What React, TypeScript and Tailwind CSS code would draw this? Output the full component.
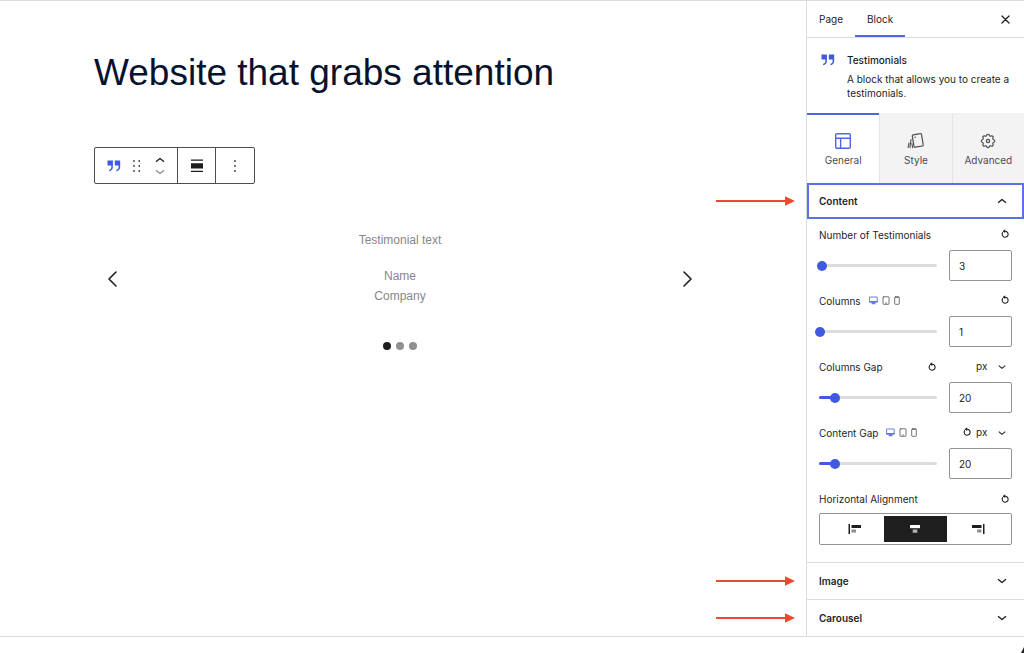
import { useState } from 'react';
import type { ReactNode } from 'react';
import clsx from 'clsx';

const stroke = {
  fill: 'none',
  stroke: 'currentColor',
  strokeLinecap: 'round',
  strokeLinejoin: 'round',
} as const;

function QuoteIcon() {
  return (
    <svg width="14" height="12" viewBox="0 0 14 12" className="text-[#3f5ae0]" aria-hidden="true">
      <path d="M.5.5h5.4v6.3c0 2.6-1.3 4.2-3.8 4.4v-1.4c1.4-.3 2.1-1.1 2.2-2.6V5.6H.5z" fill="currentColor" />
      <path d="M7.8.5h5.4v6.3c0 2.6-1.3 4.2-3.8 4.4v-1.4c1.4-.3 2.1-1.1 2.2-2.6V5.6H7.8z" fill="currentColor" />
    </svg>
  );
}

function Chevron({ up = false, className }: { up?: boolean; className?: string }) {
  return (
    <svg width="10" height="6" viewBox="0 0 10 6" className={className} aria-hidden="true">
      <path d={up ? 'M1 4.8 5 1.4l4 3.4' : 'M1 1.2l4 3.4 4-3.4'} {...stroke} strokeWidth="1.3" strokeLinecap="butt" />
    </svg>
  );
}

function ResetButton({ label }: { label: string }) {
  return (
    <button type="button" aria-label={`Reset ${label}`} className="text-[#1e1e1e]">
      <svg width="10" height="10" viewBox="0 0 10 10" aria-hidden="true">
        <path d="M2.6 3.6A3 3 0 1 0 5.2 2.2H3.4" {...stroke} strokeWidth="1.1" />
        <path d="M5.2.3 2.8 2.2l2.4 1.9z" fill="currentColor" />
      </svg>
    </button>
  );
}

/** Desktop / tablet / mobile switch beside responsive settings */
function Devices() {
  return (
    <span className="flex items-center gap-1 pb-0.5 text-[#60646a]">
      <button type="button" aria-label="Desktop" className="text-[#5b72ea]">
        <svg width="9" height="9" viewBox="0 0 9 9" aria-hidden="true">
          <path d="M.8 1h7.4v5H.8z" {...stroke} strokeWidth=".9" />
          <path d="M.5 5h8v1.4h-8zM3.5 6.2h2v1h1v1h-4v-1h1z" fill="currentColor" />
        </svg>
      </button>
      <button type="button" aria-label="Tablet">
        <svg width="8" height="9" viewBox="0 0 8 9" aria-hidden="true">
          <rect x="1" y=".8" width="6" height="7.5" rx=".7" {...stroke} strokeWidth=".9" />
          <path d="M3.3 7h1.4" {...stroke} strokeWidth=".8" />
        </svg>
      </button>
      <button type="button" aria-label="Mobile">
        <svg width="6" height="9" viewBox="0 0 6 9" aria-hidden="true">
          <rect x=".7" y=".8" width="4.6" height="7.5" rx=".7" {...stroke} strokeWidth=".9" />
          <path d="M1.5 1.2h3" {...stroke} strokeWidth="1" />
        </svg>
      </button>
    </span>
  );
}

function UnitSelect({ label }: { label: string }) {
  return (
    <span className="relative flex items-center">
      <select aria-label={`${label} unit`} className="w-[30px] appearance-none bg-transparent text-[10px] leading-4">
        <option>px</option>
      </select>
      <Chevron className="pointer-events-none absolute top-1.5 right-0 w-2" />
    </span>
  );
}

interface RangeFieldProps {
  id: string;
  label: string;
  initial: number;
  min: number;
  max: number;
  responsive?: boolean;
  unit?: boolean;
  filled?: boolean;
}

function RangeField({ id, label, initial, min, max, responsive, unit, filled }: RangeFieldProps) {
  const [value, setValue] = useState(initial);
  const percent = ((value - min) / (max - min)) * 100;
  // with no device switch there is room for the reset button next to the slider
  const resetInLabel = unit && !responsive;

  return (
    <div className="grid grid-cols-[minmax(0,1fr)_63px] gap-x-3 gap-y-[7px]">
      <div className="flex h-4 items-center gap-2">
        <label htmlFor={id} className="whitespace-nowrap">{label}</label>
        {responsive && <Devices />}
        {resetInLabel && <span className="ml-auto flex"><ResetButton label={label} /></span>}
      </div>
      <div className="flex h-4 items-center justify-end gap-1 pr-0.5 pb-0.5">
        {!resetInLabel && <ResetButton label={label} />}
        {unit && <span className="pr-1"><UnitSelect label={label} /></span>}
      </div>
      <div className="relative flex items-center">
        <div className="h-[3px] w-full rounded-full bg-[#dcdcdc]">
          {filled && <div className="h-full rounded-full bg-[#3f5ae0]" style={{ width: `${percent}%` }} />}
        </div>
        <input
          id={id}
          type="range"
          min={min}
          max={max}
          value={value}
          onChange={(e) => setValue(Number(e.target.value))}
          className="absolute inset-y-0 -left-1 w-[calc(100%+8px)] appearance-none bg-transparent [&::-webkit-slider-thumb]:h-2.5 [&::-webkit-slider-thumb]:w-2.5 [&::-webkit-slider-thumb]:appearance-none [&::-webkit-slider-thumb]:rounded-full [&::-webkit-slider-thumb]:bg-[#3f5ae0]"
        />
      </div>
      <input
        type="text"
        inputMode="numeric"
        aria-label={`${label} value`}
        value={value}
        onChange={(e) => setValue(Number(e.target.value) || 0)}
        className="h-[31px] w-full rounded-xs border border-[#949494] px-[9px] text-[10px]"
      />
    </div>
  );
}

function AlignIcon({ align }: { align: 'left' | 'center' | 'right' }) {
  return (
    <svg width="14" height="10" viewBox="0 0 14 10" fill="currentColor" aria-hidden="true">
      {align === 'left' && (
        <>
          <path d="M.5 0H2v10H.5zM3.5 1H13v3H3.5z" />
          <path d="M3.5 5.5H8v3H3.5z" opacity=".5" />
        </>
      )}
      {align === 'center' && (
        <>
          <path d="M2 1h10v3.2H2z" />
          <path d="M4.7 5.5h4.6v3.3H4.7z" opacity=".65" />
        </>
      )}
      {align === 'right' && (
        <>
          <path d="M12 0h1.5v10H12zM1 1h9.5v3H1z" />
          <path d="M6 5.5h4.5v3H6z" opacity=".5" />
        </>
      )}
    </svg>
  );
}

/** Red pointer that calls out a settings panel from the canvas side */
function Pointer() {
  return (
    <svg width="79" height="11" viewBox="0 0 79 11" className="pointer-events-none absolute top-1/2 right-full mr-3 -translate-y-1/2" aria-hidden="true">
      <path d="M0 5.5h70" stroke="#ea4a2d" strokeWidth="2" />
      <path d="M69 .8 79 5.5l-10 4.7z" fill="#ea4a2d" />
    </svg>
  );
}

function PanelHeader({ title, open = false }: { title: string; open?: boolean }) {
  return (
    <h2 className="relative">
      <button
        type="button"
        aria-expanded={open}
        className={clsx(
          'flex w-full items-center justify-between text-[10px] font-semibold',
          open ? 'h-9 border-2 border-[#5b72e6] pr-[15px] pl-2.5' : 'h-[37px] border-t border-[#dedede] pr-[17px] pl-3',
        )}
      >
        {title}
        <Chevron up={open} />
      </button>
      <Pointer />
    </h2>
  );
}

function SettingsTab({ label, active = false, children }: { label: string; active?: boolean; children: ReactNode }) {
  return (
    <button
      type="button"
      role="tab"
      aria-selected={active}
      className={clsx(
        'flex h-[70px] flex-col items-center gap-0.5 border-t-2 pt-[17px] leading-4 text-[#4a4d52]',
        active ? 'border-[#4f66e4] bg-white' : 'border-l border-l-[#e4e4e4] border-t-[#f0f0f0] bg-[#f3f3f3]',
      )}
    >
      {children}
      {label}
    </button>
  );
}

function Sidebar() {
  return (
    <aside className="w-[218px] shrink-0 border-l border-[#dcdcdc] text-[10px] text-[#1e1e1e]">
      <div className="flex h-[37px] items-stretch border-b border-[#dcdcdc]" role="tablist">
        <button type="button" role="tab" aria-selected={false} className="px-3">Page</button>
        <button type="button" role="tab" aria-selected className="border-b-2 border-[#4f66e4] px-3 pt-0.5">Block</button>
        <button type="button" aria-label="Close settings" className="ml-auto px-3.5">
          <svg width="9" height="9" viewBox="0 0 9 9" aria-hidden="true">
            <path d="m1 1 7 7M8 1 1 8" {...stroke} strokeWidth="1.3" />
          </svg>
        </button>
      </div>

      <div className="flex h-[75px] gap-3 px-[14px] pt-[14px]">
        <span className="pt-0.5"><QuoteIcon /></span>
        <div>
          <h2 className="leading-4 font-medium">Testimonials</h2>
          <p className="mt-1 leading-[14px]">A block that allows you to create a testimonials.</p>
        </div>
      </div>

      <div className="grid grid-cols-3" role="tablist">
        <SettingsTab label="General" active>
          <svg width="18" height="18" viewBox="0 0 18 18" className="text-[#4f66e4]" aria-hidden="true">
            <path d="M3 1.7h12a1.3 1.3 0 0 1 1.3 1.3v12a1.3 1.3 0 0 1-1.3 1.3H3A1.3 1.3 0 0 1 1.7 15V3A1.3 1.3 0 0 1 3 1.7zM1.7 6.3h14.6M6.6 6.3v10" {...stroke} strokeWidth="1.4" />
          </svg>
        </SettingsTab>
        <SettingsTab label="Style">
          <svg width="18" height="18" viewBox="0 0 18 18" aria-hidden="true">
            <path d="m6.2 2.8 7-1.2a1.1 1.1 0 0 1 1.3.9l1.7 10.2a1.1 1.1 0 0 1-.9 1.3l-7 1.2a1.1 1.1 0 0 1-1.3-.9L5.3 4.1a1.1 1.1 0 0 1 .9-1.3z" {...stroke} strokeWidth="1.2" />
            <path d="M4 7.5 2.9 15.6M4.9 11.5l.7 4.2M2 11l-.9 4.4" {...stroke} strokeWidth="1.1" />
            <circle cx="8.2" cy="5.2" r=".8" fill="currentColor" />
          </svg>
        </SettingsTab>
        <SettingsTab label="Advanced">
          <svg width="18" height="18" viewBox="0 0 24 24" aria-hidden="true">
            <path d="M10.3 4.3c.4-1.75 3-1.75 3.4 0a1.72 1.72 0 0 0 2.57 1.07c1.54-.94 3.3.82 2.37 2.37a1.72 1.72 0 0 0 1.06 2.56c1.76.43 1.76 2.93 0 3.36a1.72 1.72 0 0 0-1.06 2.57c.94 1.54-.83 3.3-2.37 2.37a1.72 1.72 0 0 0-2.57 1.06c-.43 1.76-2.93 1.76-3.36 0a1.72 1.72 0 0 0-2.57-1.06c-1.54.94-3.3-.83-2.37-2.37a1.72 1.72 0 0 0-1.06-2.57c-1.76-.43-1.76-2.93 0-3.36a1.72 1.72 0 0 0 1.06-2.57c-.94-1.54.83-3.3 2.37-2.37.99.61 2.3.08 2.57-1.06z" {...stroke} strokeWidth="1.6" />
            <circle cx="12" cy="12" r="2.2" {...stroke} strokeWidth="1.6" />
          </svg>
        </SettingsTab>
      </div>

      <PanelHeader title="Content" open />
      <div className="flex flex-col gap-3 px-3 pt-2 pb-[17px]">
        <RangeField id="count" label="Number of Testimonials" initial={3} min={1} max={100} />
        <RangeField id="columns" label="Columns" initial={1} min={1} max={6} responsive />
        <RangeField id="columns-gap" label="Columns Gap" initial={20} min={0} max={150} unit filled />
        <RangeField id="content-gap" label="Content Gap" initial={20} min={0} max={150} unit responsive filled />
        <div>
          <div className="flex h-4 items-center justify-between pr-0.5">
            <span id="align-label">Horizontal Alignment</span>
            <ResetButton label="Horizontal Alignment" />
          </div>
          <div role="group" aria-labelledby="align-label" className="mt-1.5 grid h-8 grid-cols-3 rounded-xs border border-[#949494] p-0.5">
            <button type="button" aria-label="Left" className="flex items-center justify-center pl-1"><AlignIcon align="left" /></button>
            <button type="button" aria-label="Center" aria-pressed className="flex items-center justify-center bg-[#1e1e1e] text-white"><AlignIcon align="center" /></button>
            <button type="button" aria-label="Right" className="flex items-center justify-center"><AlignIcon align="right" /></button>
          </div>
        </div>
      </div>

      <PanelHeader title="Image" />
      <PanelHeader title="Carousel" />
    </aside>
  );
}

function Toolbar() {
  return (
    <div role="toolbar" aria-label="Block tools" className="flex h-[37px] w-[161px] divide-x divide-[#4b4b50] rounded-xs border border-[#4b4b50] text-[#1e1e1e]">
      <div className="flex flex-1 items-center gap-3 pl-3">
        <button type="button" aria-label="Testimonials"><QuoteIcon /></button>
        <button type="button" aria-label="Drag">
          <svg width="8" height="12" viewBox="0 0 8 12" fill="currentColor" aria-hidden="true">
            <path d="M.2.2h1.5v1.5H.2zM5.5.2H7v1.5H5.5zM.2 5.2h1.5v1.5H.2zM5.5 5.2H7v1.5H5.5zM.2 10.2h1.5v1.5H.2zM5.5 10.2H7v1.5H5.5z" />
          </svg>
        </button>
        <span className="flex flex-col gap-1.5 pl-0.5">
          <button type="button" aria-label="Move up"><Chevron up /></button>
          <button type="button" aria-label="Move down" className="text-[#8b8b8b]"><Chevron /></button>
        </span>
      </div>
      <button type="button" aria-label="Align" className="flex w-[38px] items-center justify-center">
        <svg width="12" height="14" viewBox="0 0 12 14" fill="currentColor" aria-hidden="true">
          <path d="M0 .5h12v1.3H0zM0 4.2h12v5.2H0zM0 11.8h12v1.3H0z" />
        </svg>
      </button>
      <button type="button" aria-label="Options" className="flex w-[38px] items-center justify-center">
        <svg width="2" height="12" viewBox="0 0 2 12" fill="currentColor" aria-hidden="true">
          <path d="M.2.2h1.6v1.6H.2zM.2 5.2h1.6v1.6H.2zM.2 10.2h1.6v1.6H.2z" />
        </svg>
      </button>
    </div>
  );
}

function Testimonials() {
  return (
    <section className="mt-[46px] flex items-center justify-between font-['Liberation_Sans',Arial,sans-serif] text-xs text-[#85878f]">
      <button type="button" aria-label="Previous" className="pb-[22px] pl-3 text-[#1e1e2a]">
        <svg width="12" height="16" viewBox="0 0 12 16" aria-hidden="true">
          <path d="M10 1 3 8l7 7" {...stroke} strokeWidth="1.6" />
        </svg>
      </button>
      <div className="flex flex-col items-center text-center leading-5">
        <p>Testimonial text</p>
        <p className="mt-4">Name</p>
        <p>Company</p>
        <div className="mt-9 flex gap-[5px]">
          <button type="button" aria-label="Slide 1" className="size-2 rounded-full bg-[#1e1e1e]" />
          <button type="button" aria-label="Slide 2" className="size-2 rounded-full bg-[#8f8f8f]" />
          <button type="button" aria-label="Slide 3" className="size-2 rounded-full bg-[#8f8f8f]" />
        </div>
      </div>
      <button type="button" aria-label="Next" className="pr-3 pb-[22px] text-[#1e1e2a]">
        <svg width="12" height="16" viewBox="0 0 12 16" aria-hidden="true">
          <path d="m2 1 7 7-7 7" {...stroke} strokeWidth="1.6" />
        </svg>
      </button>
    </section>
  );
}

export default function App() {
  return (
    <div className="flex min-h-screen flex-col bg-white font-[Inter,sans-serif]">
      <div className="flex border-y border-[#dcdcdc]">
        <main className="min-w-0 flex-1 pt-[51px] pr-[100px] pl-[94px]">
          <h1 className="font-['Liberation_Sans',Arial,sans-serif] text-[37px] leading-[42px] text-[#06122e]">
            Website that grabs attention
          </h1>
          <div className="mt-[53px]">
            <Toolbar />
          </div>
          <Testimonials />
        </main>
        <Sidebar />
      </div>
      <footer className="flex flex-1 items-end justify-end">
        <svg width="3" height="6" viewBox="0 0 3 6" aria-hidden="true">
          <path d="M3 0v6H0z" fill="#222" />
        </svg>
      </footer>
    </div>
  );
}
